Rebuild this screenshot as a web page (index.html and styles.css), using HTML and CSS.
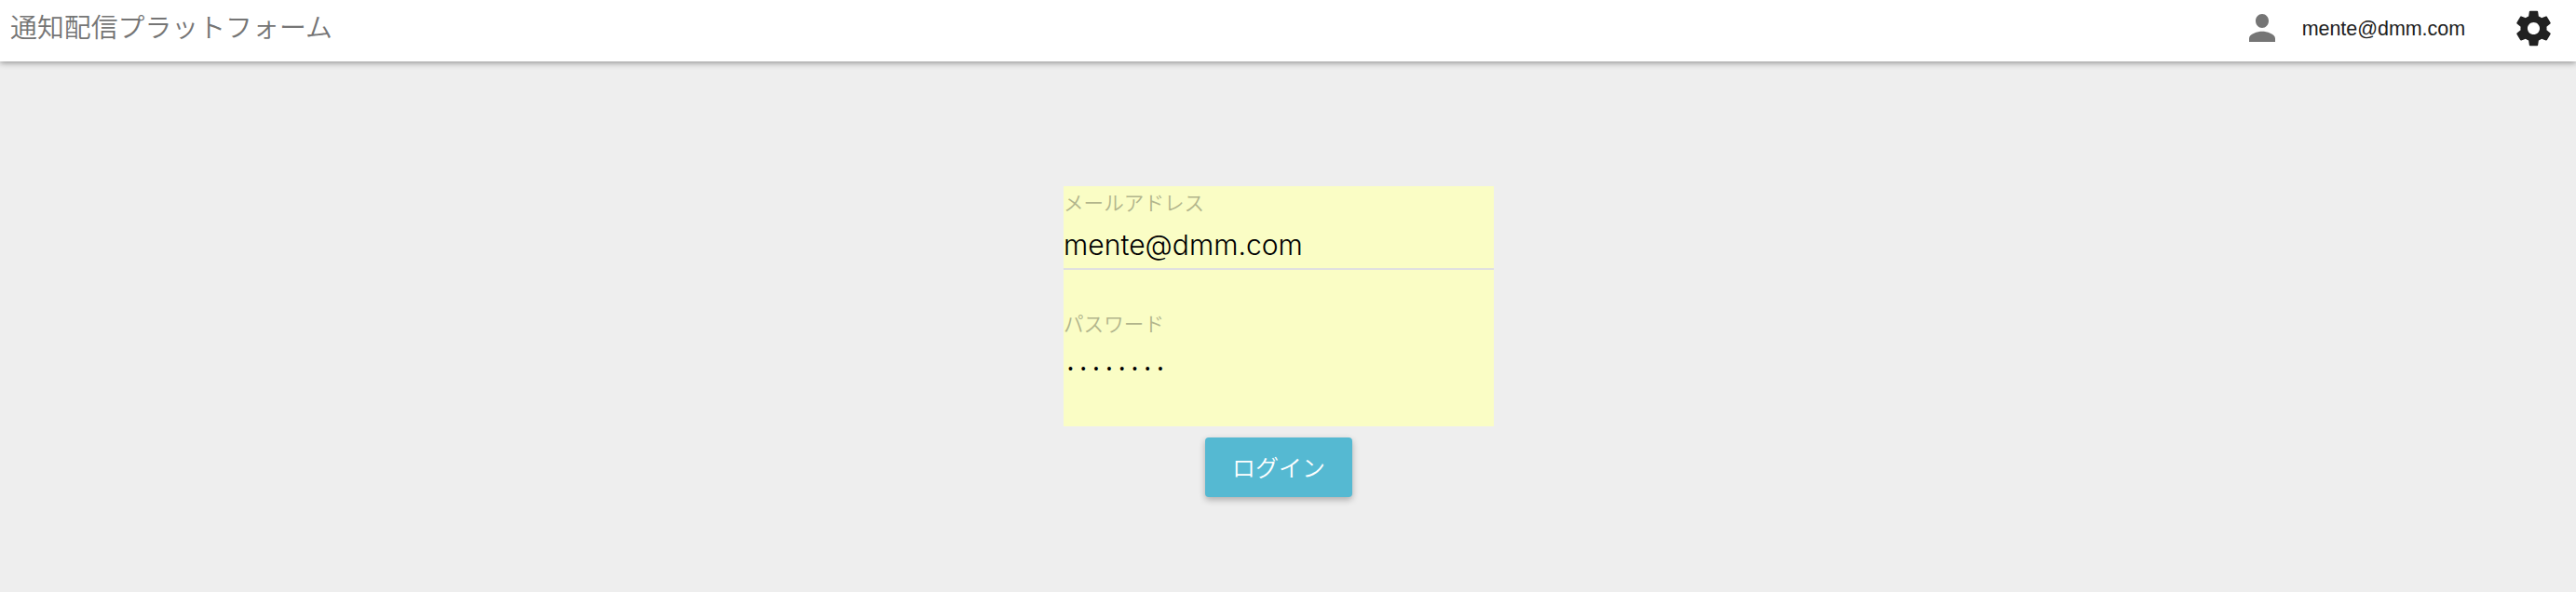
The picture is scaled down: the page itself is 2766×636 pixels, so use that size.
FILE: index.html
```html
<!DOCTYPE html>
<html lang="ja">
<head>
<meta charset="utf-8">
<title>通知配信プラットフォーム</title>
<link rel="stylesheet" href="styles.css">
</head>
<body>
<header class="header">
  <h1 class="title">通知配信プラットフォーム</h1>
  <div class="account">
    <svg class="person" viewBox="4 4 16 16" preserveAspectRatio="none"><path d="M12 12c2.21 0 4-1.79 4-4s-1.79-4-4-4-4 1.79-4 4 1.79 4 4 4zm0 2c-2.67 0-8 1.34-8 4v2h16v-2c0-2.66-5.33-4-8-4z"/></svg>
    <span class="user">mente@dmm.com</span>
    <svg class="gear" viewBox="0 0 24 24"><path d="M19.43 12.98c.04-.32.07-.64.07-.98s-.03-.66-.07-.98l2.11-1.65c.19-.15.24-.42.12-.64l-2-3.46c-.12-.22-.39-.3-.61-.22l-2.49 1c-.52-.4-1.08-.73-1.69-.98l-.38-2.65C14.46 2.18 14.25 2 14 2h-4c-.25 0-.46.18-.49.42l-.38 2.65c-.61.25-1.17.59-1.69.98l-2.49-1c-.23-.09-.49 0-.61.22l-2 3.46c-.13.22-.07.49.12.64l2.11 1.65c-.04.32-.07.65-.07.98s.03.66.07.98l-2.11 1.65c-.19.15-.24.42-.12.64l2 3.46c.12.22.39.3.61.22l2.49-1c.52.4 1.08.73 1.69.98l.38 2.65c.03.24.24.42.49.42h4c.25 0 .46-.18.49-.42l.38-2.65c.61-.25 1.17-.59 1.69-.98l2.49 1c.23.09.49 0 .61-.22l2-3.46c.12-.22.07-.49-.12-.64l-2.11-1.65zM12 15.5c-1.93 0-3.5-1.57-3.5-3.5s1.57-3.5 3.5-3.5 3.5 1.57 3.5 3.5-1.57 3.5-3.5 3.5z"/></svg>
  </div>
</header>
<main class="login">
  <div class="fields">
    <div class="field email">
      <div class="label">メールアドレス</div>
      <div class="value">mente@dmm.com</div>
    </div>
    <div class="field password">
      <div class="label">パスワード</div>
      <div class="dots">••••••••</div>
    </div>
  </div>
  <button class="submit" type="button">ログイン</button>
</main>
</body>
</html>
```
FILE: styles.css
```css
* { box-sizing: border-box; }
body {
  margin: 0;
  min-height: 636px;
  background: #eee;
  font-family: "Noto Sans CJK JP", sans-serif;
}
.header {
  display: flex;
  justify-content: space-between;
  height: 66px;
  padding: 0 23px 0 11px;
  background: #fff;
  box-shadow: 0 1px 7px rgba(0, 0, 0, .45);
}
.title {
  margin: 0;
  color: #757575;
  font-size: 28.9px;
  font-weight: 350;
  line-height: 55px;
  white-space: nowrap;
}
.account { display: flex; align-items: center; height: 60px; }
.person { width: 28px; height: 30px; margin-right: 29px; fill: #757575; }
.user {
  margin-right: 51px;
  color: #212121;
  font: 21.5px/60px "Liberation Sans", sans-serif;
  letter-spacing: -.05px;
  padding-top: 1px;
}
.gear { width: 45px; height: 45px; fill: #212121; }
.login {
  display: flex;
  flex-direction: column;
  align-items: center;
  width: 462px;
  margin: 134px 0 0 1142px;
}
.fields { width: 462px; height: 258px; background: #fafdc5; }
.email { height: 90px; border-bottom: 2px solid #e0e0e0; }
.label {
  padding-top: 1px;
  color: #b2b58c;
  font-size: 21.6px;
  font-weight: 350;
  line-height: 32px;
}
.value {
  padding: 10px 0 0;
  color: #000;
  font-family: Inter, sans-serif;
  font-size: 30.1px;
  font-weight: 300;
  line-height: 40px;
}
.password { padding-top: 40px; }
.dots {
  padding: 23px 0 0 5px;
  font: 14px/20px "Liberation Sans", sans-serif;
  letter-spacing: 8.9px;
}
.submit {
  width: 158px;
  height: 64px;
  margin-top: 12px;
  padding: 0 0 3px;
  border: 0;
  border-radius: 4px;
  background: #55b9d2;
  box-shadow: 0 3px 7px rgba(0, 0, 0, .28);
  color: #fff;
  font: 350 25px/60px "Noto Sans CJK JP", sans-serif;
}
```
